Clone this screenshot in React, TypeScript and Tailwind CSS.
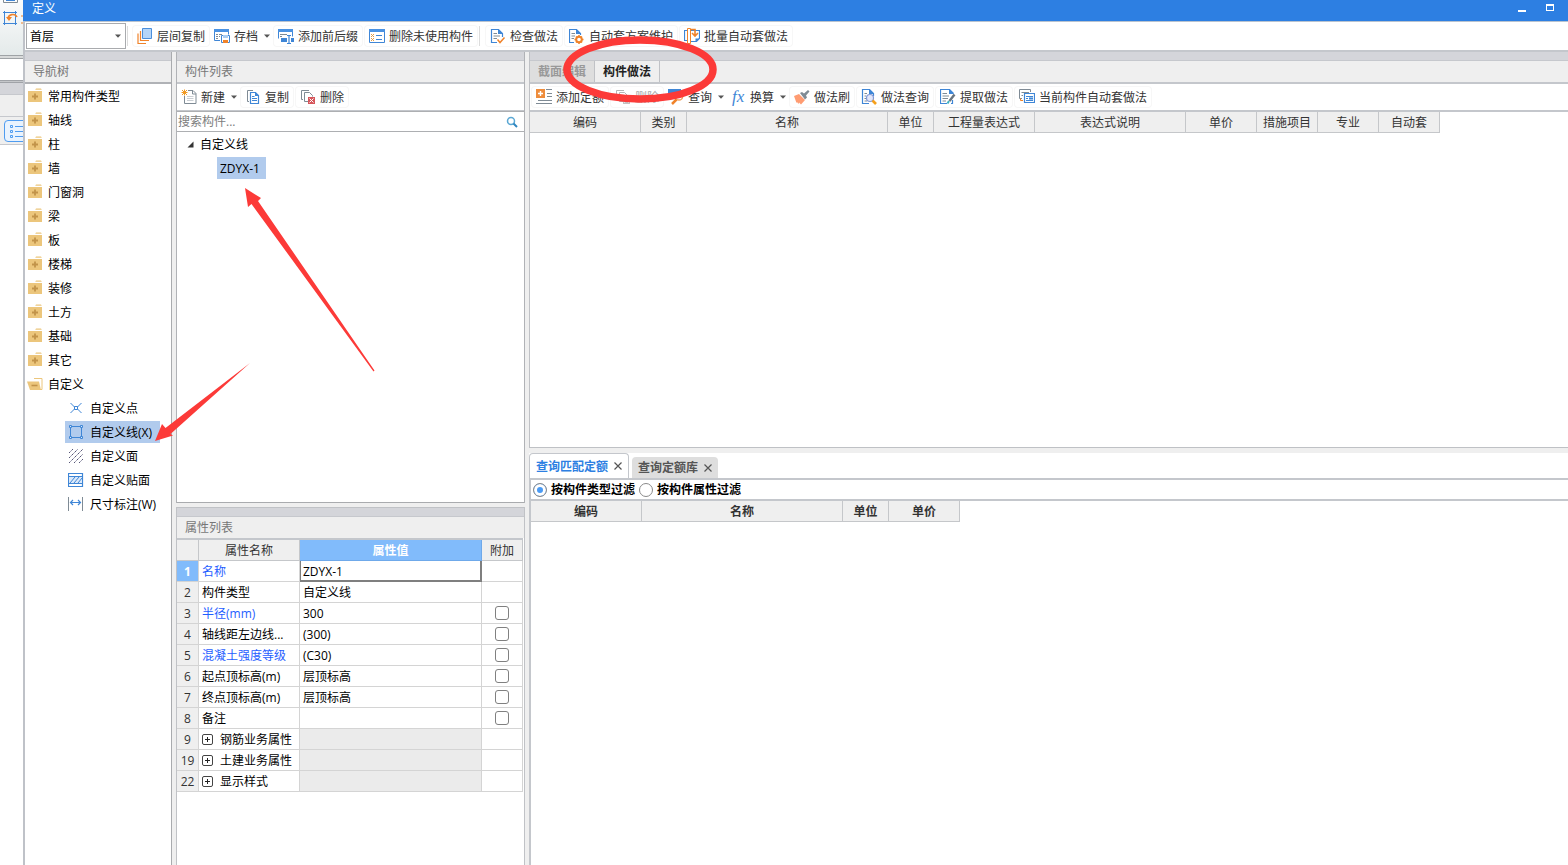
import React, { useState } from 'react';

type IconProps = { children: React.ReactNode };

function Icon({ children }: IconProps) {
  return (
    <svg viewBox="0 0 16 16" className="size-4 shrink-0" fill="none" aria-hidden="true">
      {children}
    </svg>
  );
}

function Caret() {
  return (
    <svg viewBox="0 0 6 4" className="h-1 w-1.5 shrink-0" aria-hidden="true">
      <path d="M0 .5h6L3 3.7z" fill="#555" />
    </svg>
  );
}

const BLUE = '#3f86d6';
const ORANGE = '#f0832a';
const GRAY = '#7f8b95';

const icons = {
  layerCopy: (
    <Icon>
      <path d="M5.5.5h9v10h-9z" fill="#b5d5f8" stroke="#4a8edb" />
      <path d="M3.5 3v9.5H12M1 5.500v10h8" stroke={ORANGE} strokeWidth="1.2" />
    </Icon>
  ),
  archive: (
    <Icon>
      <path d="M.5 1.500h14v5M.5 1.500v11H6" stroke={BLUE} />
      <path d="M0 1h15v3H0z" fill="#4a92e2" />
      <path d="M2 6.500h2M5 6.500h3M2 8.500h2M5 8.500h1M2 10.500h2" stroke={GRAY} />
      <path d="M7.500 7.500h8v7h-8z" fill="#fff" stroke={BLUE} />
      <path d="M9 7h5v3H9z" fill="#a9cdf2" />
      <path d="M9 12h5v3H9z" fill={ORANGE} />
    </Icon>
  ),
  affix: (
    <Icon>
      <path d="M.5 1.500h14v7M.5 1.500v9" stroke={BLUE} />
      <path d="M0 1h15v3H0z" fill="#4a92e2" />
      <path d="M2 6.500h7M2 8.500h2" stroke={GRAY} />
      <path d="M3 10h6v4H3zM13 10h3v4h-3z" fill={BLUE} />
      <path d="M9 7.500h4M11 7.500v8M9 15.500h4" stroke={BLUE} strokeWidth="1.2" />
    </Icon>
  ),
  unused: (
    <Icon>
      <path d="M.5 1.500h15v13H.5z" fill="#fff" stroke={BLUE} />
      <path d="M0 1h16v3H0z" fill="#4a92e2" />
      <path d="M2 6l3 3M5 6l-3 3M2 10l3 3M5 10l-3 3" stroke="#e59b42" />
      <path d="M7 7.500h6M7 11.500h6" stroke={BLUE} />
    </Icon>
  ),
  check: (
    <Icon>
      <path d="M7 14.500H1.500v-13h7l4 4V9" stroke={BLUE} strokeWidth="1.2" />
      <path d="M8 1v5h5z" fill={BLUE} />
      <path d="M3.500 5.500H7M3.500 8H10M3.500 10.500H7" stroke={GRAY} />
      <path d="M7.500 11.500l2.500 3 4.500-5" stroke={ORANGE} strokeWidth="1.5" />
    </Icon>
  ),
  scheme: (
    <Icon>
      <path d="M5 14.500H.5v-13h7l4 4V7" stroke={BLUE} strokeWidth="1.2" />
      <path d="M7 1v5h5z" fill={BLUE} />
      <path d="M2.500 5.500H6M2.500 8H6M2.500 10.500H5" stroke={GRAY} />
      <circle cx="10" cy="11.500" r="2.800" stroke={ORANGE} strokeWidth="2" />
      <path d="M10 7v2M10 14v2M5.500 11.500h2M12.500 11.500h2M7 8.500l1 1M13 8.500l-1 1M7 14.500l1-1M13 14.500l-1-1" stroke={ORANGE} strokeWidth="1.500" />
    </Icon>
  ),
  batch: (
    <Icon>
      <path d="M3 2.500H.5v10H3M6 2.500h9.500v8l-3 3H6" stroke={BLUE} strokeWidth="1.2" />
      <path d="M3.500.500h3v15h-3z" fill="#fff" stroke={ORANGE} />
      <path d="M7 1.500h4v6M8 5l3 3 3-3" stroke={ORANGE} strokeWidth="1.6" />
      <path d="M11.500 14v-3.500h4z" fill={BLUE} />
    </Icon>
  ),
  create: (
    <Icon>
      <path d="M7 1.500h5l3 3v10H3.500V7" stroke={GRAY} />
      <path d="M11.500 1.500v3.500h3.500" stroke={GRAY} />
      <path d="M6 7.500h6.500M6 9.500h6.500M6 11.500h6.500" stroke="#c9ced3" />
      <path d="M1 1l5 5M6 1L1 6M3.500.500v6M.5 3.500h6" stroke="#f29b24" />
    </Icon>
  ),
  copy: (
    <Icon>
      <path d="M8 1.500H2.500v11H4" stroke={GRAY} />
      <path d="M5.500 3.500h5l3 3v8h-8z" fill="#fff" stroke={BLUE} strokeWidth="1.2" />
      <path d="M10 3v4h4z" fill={BLUE} />
      <path d="M7 7.500h2.500M7 9.500h5M7 11.500h5" stroke={BLUE} />
    </Icon>
  ),
  remove: (
    <Icon>
      <path d="M9 1.500H1.500v9H3M8 12.500H4.500v-9h5l3 3v1" stroke={GRAY} />
      <path d="M8 8h7v7H8z" fill="#d6565b" />
      <path d="M9.500 9.500l4 4M13.500 9.500l-4 4" stroke="#fff" />
    </Icon>
  ),
  removeOff: (
    <Icon>
      <path d="M9 1.500H1.500v9H3M8 12.500H4.500v-9h5l3 3v1" stroke="#b5b5b5" />
      <path d="M8 8h7v7H8z" fill="#c2c2c2" />
      <path d="M9.500 9.500l4 4M13.500 9.500l-4 4" stroke="#fff" />
    </Icon>
  ),
  addQuota: (
    <Icon>
      <path d="M0 0h9v9H0z" fill="#ee8d3d" />
      <path d="M4.500 2v5M2 4.500h5" stroke="#fff" strokeWidth="1.400" />
      <path d="M10 .500h6M11 4.500h5M11 7.500h5M2 11.500h14M0 14.500h16" stroke={GRAY} />
    </Icon>
  ),
  query: (
    <Icon>
      <path d="M.5 9V1.500h12V4" stroke={BLUE} />
      <path d="M0 0h13v4H0z" fill={BLUE} />
      <circle cx="11" cy="7.500" r="3.600" fill="#fff" stroke="#f2a15c" strokeWidth="1.500" />
      <path d="M8.500 10.500L4 15" stroke={ORANGE} strokeWidth="2.500" />
    </Icon>
  ),
  convert: (
    <span aria-hidden="true" className="w-4 pl-0.5 text-left font-['Liberation_Serif',serif] text-[17px] leading-[22px] text-[#3f86d6] italic">
      fx
    </span>
  ),
  brush: (
    <Icon>
      <path d="M0 7l5-2 6 6-4 4.500-2-2-.5 1.500L3 13l-.5 1z" fill="#ff9c72" />
      <path d="M6 4l2-1 2 1.500L14 1l1.500 1.500L12 6.500l1 2-2 2z" fill={GRAY} />
    </Icon>
  ),
  methodQuery: (
    <Icon>
      <path d="M8 14.500H1.500V.500h7l4 4V7" stroke={BLUE} strokeWidth="1.200" />
      <path d="M8 0v5h5z" fill={BLUE} />
      <path d="M3.500 4.500H6M3.500 7H5M3.500 9.500H5M3.500 12H6" stroke={GRAY} />
      <circle cx="9" cy="9" r="3.500" fill="#e2e6fa" stroke="#829ad6" strokeWidth="1.200" />
      <path d="M11.500 11.500L15 15" stroke="#f5a01c" strokeWidth="2.600" />
    </Icon>
  ),
  extract: (
    <Icon>
      <path d="M7 14.500H.5V.500h9l4 4M12.500 11v3.500H11" stroke={BLUE} strokeWidth="1.200" />
      <path d="M9 0v5h5z" fill={BLUE} />
      <path d="M2.500 4.500H7M2.500 7H9M2.500 9.500H8M2.500 12H6" stroke={GRAY} />
      <path d="M14.500 5.500l-5 6.500" stroke="#68747f" strokeWidth="2.400" />
      <path d="M9 12l-1.500 2.500" stroke="#3db2c0" strokeWidth="2" />
    </Icon>
  ),
  current: (
    <Icon>
      <path d="M3 9.500H.5v-9h11V3M2.500 3.500H10M2.500 6.500H4" stroke={GRAY} />
      <path d="M1.500 9.500v2H4" stroke={ORANGE} />
      <path d="M5.500 4.500h10v9h-10z" fill="#fff" stroke={BLUE} strokeWidth="1.200" />
      <path d="M7 7.500h7M7 9.500h2M7 11.500h7" stroke={BLUE} />
      <path d="M10 8.500h4v2h-4z" fill={BLUE} />
    </Icon>
  ),
  point: (
    <Icon>
      <path d="M2.500 3l4 4M13.500 3l-4 4M2.500 13l4-4M13.500 13l-4-4M6.500 6.500h3v3h-3z" stroke={BLUE} />
    </Icon>
  ),
  line: (
    <Icon>
      <path d="M2.500 2.500h11v11h-11z" stroke={BLUE} />
      <path d="M1.500 1.500h2v2h-2zM12.500 1.500h2v2h-2zM1.500 12.500h2v2h-2zM12.500 12.500h2v2h-2z" fill="#dbe9fa" stroke={BLUE} />
    </Icon>
  ),
  face: (
    <Icon>
      <path d="M1 5l4-4M1 10l9-9M1 15L15 1M6 15l9-9M11 15l4-4" stroke="#557" strokeDasharray="1.500 .6" />
    </Icon>
  ),
  veneer: (
    <Icon>
      <path d="M.5 1.500h14v13H.5z" stroke={BLUE} strokeWidth="1.200" />
      <path d="M1 5h13v6H1z" fill="#dbe9fa" />
      <path d="M.5 4.500h14M.5 11.500h14M2 11l5-6M6 11l5-6M10 11l4-5" stroke={BLUE} />
    </Icon>
  ),
  dimension: (
    <Icon>
      <path d="M.5 1v14M14.500 1v14" stroke={GRAY} />
      <path d="M2.500 6.500h10M5 4L2.500 6.500 5 9M10 4l2.500 2.500L10 9" stroke={BLUE} strokeWidth="1.200" />
    </Icon>
  ),
  folder: (
    <Icon>
      <path d="M9 .500h5l.8 1.200H8.200zM1 3h14v11H1z" fill="#ecc67c" />
      <path d="M8 5.500v6M5 8.500h6" stroke="#c2934a" strokeWidth="1.800" />
    </Icon>
  ),
  folderOpen: (
    <Icon>
      <path d="M7 2.500h8v11H4" stroke="#ecc67c" />
      <path d="M0 5.500h12L14 14H3z" fill="#ecc67c" />
      <path d="M4.500 9.500h6" stroke="#c2934a" strokeWidth="1.600" />
    </Icon>
  ),
};

type Tool = { icon: keyof typeof icons; label: string; menu?: boolean; disabled?: boolean };

function ToolButton({ icon, label, menu, disabled }: Tool) {
  return (
    <button
      type="button"
      disabled={disabled}
      className={`flex h-[22px] shrink-0 items-center rounded-sm whitespace-nowrap hover:bg-[#e5f0fc] ${
        menu ? 'pr-0.5 pl-[3px]' : 'px-[5px] shadow-[inset_0_0_0_1px_#f7f7f7]'
      } ${disabled ? 'text-[#a8a8a8]' : 'text-[#333]'}`}
    >
      {icons[icon]}
      <span className="ml-1">{label}</span>
      {menu && (
        <span className="ml-1.5">
          <Caret />
        </span>
      )}
    </button>
  );
}

function Separator() {
  return <span className="mr-1 h-5 w-px shrink-0 bg-[#dcdcdc]" />;
}

function PanelStrip() {
  return <div className="h-[9px] shrink-0 border-b border-[#c6c8cd] bg-[#d4d5da]" />;
}

function PanelTitle({ children }: { children: React.ReactNode }) {
  return <h2 className="flex h-[21px] shrink-0 items-center bg-[#efefef] pl-2 text-[#777]">{children}</h2>;
}

function HeaderTable({ columns, bold, label }: { columns: { name: string; width: string }[]; bold?: boolean; label: string }) {
  return (
    <table aria-label={label} className="w-0 table-fixed border-separate border-spacing-0">
      <colgroup>
        {columns.map((c) => (
          <col key={c.name} className={c.width} />
        ))}
      </colgroup>
      <thead>
        <tr>
          {columns.map((c) => (
            <th
              key={c.name}
              className={`h-[21px] border-r border-b border-[#c5c7ca] bg-[#efefef] p-0 pt-px leading-[17px] whitespace-nowrap text-[#333] ${
                bold ? 'font-bold' : 'font-normal'
              }`}
            >
              {c.name}
            </th>
          ))}
        </tr>
      </thead>
    </table>
  );
}

const mainTools: Tool[] = [
  { icon: 'layerCopy', label: '层间复制' },
  { icon: 'archive', label: '存档', menu: true },
  { icon: 'affix', label: '添加前后缀' },
  { icon: 'unused', label: '删除未使用构件' },
];
const schemeTools: Tool[] = [
  { icon: 'check', label: '检查做法' },
  { icon: 'scheme', label: '自动套方案维护' },
  { icon: 'batch', label: '批量自动套做法' },
];
const listTools: Tool[] = [
  { icon: 'create', label: '新建', menu: true },
  { icon: 'copy', label: '复制' },
  { icon: 'remove', label: '删除' },
];
const methodTools: Tool[] = [
  { icon: 'addQuota', label: '添加定额' },
  { icon: 'removeOff', label: '删除', disabled: true },
  { icon: 'query', label: '查询', menu: true },
  { icon: 'convert', label: '换算', menu: true },
  { icon: 'brush', label: '做法刷' },
  { icon: 'methodQuery', label: '做法查询' },
  { icon: 'extract', label: '提取做法' },
  { icon: 'current', label: '当前构件自动套做法' },
];

const folders = ['常用构件类型', '轴线', '柱', '墙', '门窗洞', '梁', '板', '楼梯', '装修', '土方', '基础', '其它'];
const customItems: { icon: keyof typeof icons; label: string }[] = [
  { icon: 'point', label: '自定义点' },
  { icon: 'line', label: '自定义线(X)' },
  { icon: 'face', label: '自定义面' },
  { icon: 'veneer', label: '自定义贴面' },
  { icon: 'dimension', label: '尺寸标注(W)' },
];

const methodColumns = [
  { name: '编码', width: 'w-[111px]' },
  { name: '类别', width: 'w-[46px]' },
  { name: '名称', width: 'w-[201px]' },
  { name: '单位', width: 'w-[46px]' },
  { name: '工程量表达式', width: 'w-[101px]' },
  { name: '表达式说明', width: 'w-[151px]' },
  { name: '单价', width: 'w-[71px]' },
  { name: '措施项目', width: 'w-[61px]' },
  { name: '专业', width: 'w-[61px]' },
  { name: '自动套', width: 'w-[61px]' },
];
const quotaColumns = [
  { name: '编码', width: 'w-[111px]' },
  { name: '名称', width: 'w-[201px]' },
  { name: '单位', width: 'w-[46px]' },
  { name: '单价', width: 'w-[71px]' },
];

type Property = { no: number; name: string; value?: string; link?: boolean; extra?: boolean; group?: boolean };
const properties: Property[] = [
  { no: 1, name: '名称', value: 'ZDYX-1', link: true },
  { no: 2, name: '构件类型', value: '自定义线' },
  { no: 3, name: '半径(mm)', value: '300', link: true, extra: true },
  { no: 4, name: '轴线距左边线...', value: '(300)', extra: true },
  { no: 5, name: '混凝土强度等级', value: '(C30)', link: true, extra: true },
  { no: 6, name: '起点顶标高(m)', value: '层顶标高', extra: true },
  { no: 7, name: '终点顶标高(m)', value: '层顶标高', extra: true },
  { no: 8, name: '备注', value: '', extra: true },
  { no: 9, name: '钢筋业务属性', group: true },
  { no: 19, name: '土建业务属性', group: true },
  { no: 22, name: '显示样式', group: true },
];

function HostWindowEdge() {
  return (
    <div className="flex w-[23px] shrink-0 flex-col overflow-hidden bg-white" aria-hidden="true">
      <div className="h-[55px] bg-linear-to-b from-[#fbfcfc] to-[#e4eaea]">
        <svg viewBox="0 0 23 28" className="h-7 w-[23px]" fill="none">
          <path d="M3.500 0v2.500h14V0" stroke={GRAY} />
          <path d="M6 .500h9" stroke={BLUE} />
          <path d="M4.500 11v14M15.500 11v14M3 12.500h14M3 23.500h14" stroke={BLUE} />
          <path d="M8 19c0-5 7-6 9-2" stroke={ORANGE} strokeWidth="1.600" />
          <path d="M6 17h6l-3 4z" fill={ORANGE} />
          <path d="M22 15v2M22 22v2" stroke={ORANGE} />
        </svg>
      </div>
      <div className="h-1 border-y border-[#9fa3a6] bg-[#d8dada]" />
      <div className="h-[21px] bg-white" />
      <div className="h-[3px] border-y border-[#a0a3a8] bg-[#c5c7ca]" />
      <div className="h-3 border-b border-[#c6c8cd] bg-[#d4d5da]" />
      <div className="h-[50px] border-b border-[#c6c8cd] bg-[#efefef] pt-[21px]">
        <div className="h-7 border-t border-[#c6c8cd] pt-[3px] pl-1">
          <svg viewBox="0 0 19 22" className="h-[22px] w-[19px]" fill="none">
            <path d="M19 .500H4a3.500 3.500 0 0 0-3.500 3.500v14A3.500 3.500 0 0 0 4 21.500h15" fill="#e9f3fe" stroke="#4f9cf0" />
            <path d="M6.500 5.500h2v2h-2zM6.500 10.500h2v2h-2zM6.500 15.500h2v2h-2zM11 6.500h8M11 11.500h8M11 16.500h8" stroke="#4f9cf0" />
          </svg>
        </div>
      </div>
    </div>
  );
}

function NavigationTree() {
  return (
    <nav aria-label="导航树" className="flex w-[147px] shrink-0 flex-col border-r border-[#a9abae] bg-white">
      <PanelStrip />
      <PanelTitle>导航树</PanelTitle>
      <ul className="border-t-2 border-[#b0b2b6]">
        {folders.map((name) => (
          <li key={name}>
            <button type="button" className="flex h-6 w-full items-center gap-[5px] pl-0.5 text-left">
              {icons.folder}
              {name}
            </button>
          </li>
        ))}
        <li>
          <button type="button" className="flex h-6 w-full items-center gap-[5px] pl-0.5 text-left">
            {icons.folderOpen}
            自定义
          </button>
          <ul>
            {customItems.map((item) => (
              <li key={item.label} className="flex h-6 items-center pl-10">
                <button
                  type="button"
                  className={`flex h-[22px] items-center gap-1.5 px-[3px] pr-2 whitespace-nowrap ${item.icon === 'line' ? 'bg-[#b1cbed]' : ''}`}
                >
                  {icons[item.icon]}
                  {item.label}
                </button>
              </li>
            ))}
          </ul>
        </li>
      </ul>
    </nav>
  );
}

function ComponentList() {
  return (
    <section className="flex flex-col border-x border-[#b0b2b6] bg-white">
      <PanelStrip />
      <PanelTitle>构件列表</PanelTitle>
      <div className="flex h-[29px] items-center gap-px border-t-2 border-b border-[#c4c7cc] pl-px">
        {listTools.map((t) => (
          <ToolButton key={t.label} {...t} />
        ))}
      </div>
      <div className="flex h-[21px] items-center border-y border-[#adafb2] pr-1.5">
        <input aria-label="搜索构件" placeholder="搜索构件..." className="h-[18px] min-w-0 flex-1 pl-px outline-none placeholder:text-[#7d7d7d]" />
        <button type="button" aria-label="搜索" className="flex">
          <svg viewBox="0 0 12 12" className="size-3" fill="none">
            <circle cx="5" cy="5" r="3.500" stroke="#5ba8d4" strokeWidth="1.500" />
            <path d="M7.500 7.500L11 11" stroke="#2f86c0" strokeWidth="2" />
          </svg>
        </button>
      </div>
      <ul className="h-[371px] border-b border-[#a9abae]">
        <li>
          <button type="button" className="flex h-6 items-center gap-1.5 pl-2.5">
            <svg viewBox="0 0 7 7" className="size-[7px]" aria-hidden="true">
              <path d="M6.500.500v6h-6z" fill="#333" />
            </svg>
            自定义线
          </button>
          <ul>
            <li className="flex h-6 items-center pl-10">
              <button type="button" className="h-[22px] bg-[#b1cbed] pr-1.5 pl-[3px]">
                ZDYX-1
              </button>
            </li>
          </ul>
        </li>
      </ul>
    </section>
  );
}

function PropertyList() {
  return (
    <section className="mt-1 flex flex-1 flex-col border-x border-t border-[#c0c2c6] bg-white">
      <PanelStrip />
      <PanelTitle>属性列表</PanelTitle>
      <table aria-label="属性列表" className="w-[346px] table-fixed border-separate border-spacing-0 border-t-2 border-[#c4c7cc]">
        <colgroup>
          <col className="w-[22px]" />
          <col className="w-[101px]" />
          <col className="w-[182px]" />
          <col className="w-[41px]" />
        </colgroup>
        <thead>
          <tr className="text-[#333] [&>th]:h-[21px] [&>th]:border-r [&>th]:border-b [&>th]:p-0 [&>th]:pt-px [&>th]:leading-[17px]">
            <th className="border-[#c5c7ca] bg-[#efefef]" aria-label="序号" />
            <th className="border-[#c5c7ca] bg-[#efefef] font-normal">属性名称</th>
            <th className="border-[#6fa9ea] bg-[#81bbfb] font-bold text-white">属性值</th>
            <th className="border-[#c5c7ca] bg-[#efefef] font-normal">附加</th>
          </tr>
        </thead>
        <tbody>
          {properties.map((p) => (
            <tr key={p.no} className="[&>*]:h-[21px] [&>*]:border-r [&>*]:border-b [&>*]:border-[#d4d4d4] [&>*]:leading-[17px] [&>*]:whitespace-nowrap">
              <th className={p.no === 1 ? 'bg-[#81bbfb] p-0 pt-px font-bold text-white' : 'bg-[#efefef] p-0 pt-px font-normal text-[#333]'}>{p.no}</th>
              <td className={`overflow-hidden p-0 pt-px pl-[3px] ${p.link ? 'text-[#1f5eff]' : ''}`}>
                {p.group ? (
                  <span className="flex items-center">
                    <button type="button" aria-label={`展开${p.name}`} className="mr-[7px] flex">
                      <svg viewBox="0 0 11 11" className="size-[11px]" fill="none">
                        <rect x=".5" y=".5" width="10" height="10" rx="1.500" stroke="#444" />
                        <path d="M5.500 3v5M3 5.500h5" stroke="#222" />
                      </svg>
                    </button>
                    {p.name}
                  </span>
                ) : (
                  p.name
                )}
              </td>
              <td className={p.group ? 'bg-[#ebebeb] p-0' : p.no === 1 ? 'p-0' : 'p-0 pt-px pl-[3px]'}>
                {p.no === 1 ? (
                  <input
                    aria-label={p.name}
                    defaultValue={p.value}
                    className="-mb-px block h-[21px] w-[182px] border-r-2 border-b-2 border-l border-[#7f7f7f] pt-px pl-0.5 outline-none"
                  />
                ) : (
                  p.value
                )}
              </td>
              <td className="p-0">
                {p.extra && (
                  <input
                    type="checkbox"
                    aria-label={`附加 ${p.name}`}
                    className="mx-auto block size-3.5 appearance-none rounded-[3px] border border-[#808080] bg-white checked:bg-[#4a92e2]"
                  />
                )}
              </td>
            </tr>
          ))}
        </tbody>
      </table>
    </section>
  );
}

function CloseMark() {
  return (
    <svg viewBox="0 0 8 8" className="size-2" fill="none" aria-hidden="true">
      <path d="M.5.500l7 7M7.500.500l-7 7" stroke="#555" strokeWidth="1.200" />
    </svg>
  );
}

function FilterRadio({ label, checked, onSelect }: { label: string; checked: boolean; onSelect: () => void }) {
  return (
    <label className="flex items-center gap-1 font-bold whitespace-nowrap">
      <input
        type="radio"
        name="filter"
        checked={checked}
        onChange={onSelect}
        className="size-3.5 appearance-none rounded-full border border-[#8a8a8a] bg-white checked:bg-[#4a9bf5] checked:shadow-[inset_0_0_0_3px_#fff]"
      />
      {label}
    </label>
  );
}

function MethodPane() {
  const [filter, setFilter] = useState('type');
  return (
    <main className="ml-1 flex min-w-0 flex-1 flex-col">
      <section className="flex flex-col border-b border-l border-[#bfc1c5] bg-white">
        <PanelStrip />
        <div role="tablist" className="flex h-[21px] bg-[#efefef]">
          <button type="button" role="tab" aria-selected="false" className="border-r border-[#c0c2c6] bg-[#dedede] px-2 font-bold text-[#999]">
            截面编辑
          </button>
          <button type="button" role="tab" aria-selected="true" className="border-r border-[#c0c2c6] px-2 font-bold text-[#222]">
            构件做法
          </button>
        </div>
        <div className="flex h-[30px] items-center gap-px border-y-2 border-[#c4c7cc] pl-px">
          {methodTools.map((t) => (
            <ToolButton key={t.label} {...t} />
          ))}
        </div>
        <div className="h-[335px]">
          <HeaderTable columns={methodColumns} label="构件做法" />
        </div>
      </section>
      <section className="mt-[5px] flex flex-1 flex-col bg-white">
        <div role="tablist" className="flex h-[25px] items-end gap-[3px]">
          <div className="flex h-[25px] items-center gap-1.5 rounded-t border border-b-0 border-[#c4c7cc] px-1.5">
            <button type="button" role="tab" aria-selected="true" className="font-bold text-[#2d7fe2]">
              查询匹配定额
            </button>
            <button type="button" aria-label="关闭查询匹配定额">
              <CloseMark />
            </button>
          </div>
          <div className="flex h-[21px] items-center gap-1.5 rounded-t bg-[#dedede] px-1.5">
            <button type="button" role="tab" aria-selected="false" className="font-bold text-[#555]">
              查询定额库
            </button>
            <button type="button" aria-label="关闭查询定额库">
              <CloseMark />
            </button>
          </div>
        </div>
        <div className="flex flex-1 flex-col border-t-2 border-l-2 border-[#c4c7cc]">
          <div className="flex h-[21px] items-center gap-1 border-b-2 border-[#c4c7cc] pl-0.5">
            <FilterRadio label="按构件类型过滤" checked={filter === 'type'} onSelect={() => setFilter('type')} />
            <FilterRadio label="按构件属性过滤" checked={filter === 'property'} onSelect={() => setFilter('property')} />
          </div>
          <HeaderTable columns={quotaColumns} label="查询匹配定额" bold />
        </div>
      </section>
    </main>
  );
}

function Annotations() {
  return (
    <svg className="pointer-events-none absolute inset-0 h-full w-full" fill="none" aria-hidden="true">
      <ellipse cx="640" cy="69.500" rx="73" ry="29.500" stroke="#fc3a38" strokeWidth="7.500" />
      <path d="M245 188l16 10-3 3L374.500 370.500 373.500 371.500 251.500 204l-3.500 3z" fill="#fc3a38" />
      <path d="M155 441l7-17 3.500 4L250 363l-79.500 71 2.500 1.500z" fill="#fc3a38" />
    </svg>
  );
}

export default function App() {
  return (
    <div className="relative flex min-h-screen overflow-hidden bg-white font-['Open_Sans','Noto_Sans_CJK_SC',sans-serif] text-xs leading-[17px] text-black">
      <HostWindowEdge />
      <div className="flex min-w-0 flex-1 flex-col">
        <header className="flex h-[22px] items-start justify-between border-b border-[#b9c3cf] bg-[#2d7fe2] pl-[9px] text-white">
          <h1>定义</h1>
          <div className="flex gap-5 pt-1 pr-3.5">
            <button type="button" aria-label="最小化" className="flex h-2 w-2 items-end">
              <span className="h-0.5 w-2 bg-white" />
            </button>
            <button type="button" aria-label="最大化" className="h-[7px] w-2 border border-t-2 border-white" />
          </div>
        </header>
        <div className="flex flex-1 flex-col border-l-2 border-[#bfc2c8]">
          <div className="flex h-[30px] items-center gap-px border-b-2 border-[#c4c7cc] bg-white pl-px">
            <div className="relative">
              <select aria-label="楼层" className="block h-[26px] w-[100px] appearance-none border border-[#a9abae] bg-white pt-px pl-[3px] outline-none">
                <option>首层</option>
              </select>
              <span className="pointer-events-none absolute top-[11px] right-[5px] flex">
                <Caret />
              </span>
            </div>
            <Separator />
            <span className="-ml-px flex items-center gap-px">
              {mainTools.map((t) => (
                <ToolButton key={t.label} {...t} />
              ))}
            </span>
            <Separator />
            {schemeTools.map((t) => (
              <ToolButton key={t.label} {...t} />
            ))}
          </div>
          <div className="flex flex-1 bg-[#efefef]">
            <NavigationTree />
            <div className="ml-1 flex w-[349px] shrink-0 flex-col">
              <ComponentList />
              <PropertyList />
            </div>
            <MethodPane />
          </div>
        </div>
      </div>
      <Annotations />
    </div>
  );
}
